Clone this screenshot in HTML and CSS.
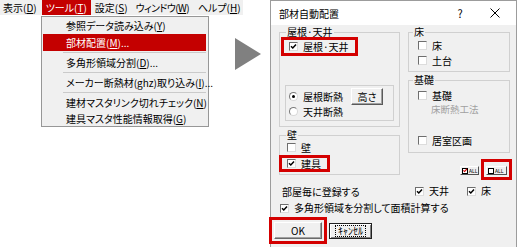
FILE: index.html
```html
<!DOCTYPE html>
<html lang="ja">
<head>
  <meta charset="UTF-8">
  <title>部材自動配置</title>
  <link rel="stylesheet" href="styles.css">
</head>
<body>
  <div class="app">
    <nav class="menubar">
      <span class="menu">表示(<u>D</u>)</span>
      <span class="menu active">ツール(<u>T</u>)</span>
      <span class="menu">設定(<u>S</u>)</span>
      <span class="menu narrow">ウィンドウ(<u>W</u>)</span>
      <span class="menu">ヘルプ(<u>H</u>)</span>
    </nav>
    <ul class="dropdown">
      <li class="item">参照データ読み込み(<u>Y</u>)</li>
      <li class="item selected">部材配置(<u>M</u>)...</li>
      <li class="sep"></li>
      <li class="item">多角形領域分割(<u>D</u>)...</li>
      <li class="sep"></li>
      <li class="item">メーカー断熱材(ghz)取り込み(<u>I</u>)...</li>
      <li class="sep"></li>
      <li class="item">建材マスタリンク切れチェック(<u>N</u>)</li>
      <li class="item">建具マスタ性能情報取得(<u>G</u>)</li>
    </ul>
  </div>

  <svg class="arrow" width="27" height="32" viewBox="0 0 27 32">
    <polygon points="0,0 26,16 0,32" fill="#808080"/>
  </svg>

  <div class="dialog">
    <div class="titlebar">
      <span class="title">部材自動配置</span>
      <span class="help">?</span>
      <span class="close">
        <svg width="10" height="10" viewBox="0 0 10 10"><path d="M0.5 0.5 L9.5 9.5 M9.5 0.5 L0.5 9.5" stroke="#000" stroke-width="1"/></svg>
      </span>
    </div>

    <div class="dialog-body">
      <div class="columns">
        <div class="col">
          <fieldset class="group roof">
            <legend>屋根·天井</legend>
            <label class="check mark roof-check"><span class="cb on"><svg viewBox="0 0 7 7"><path d="M1 3.2 L2.8 5 L6 1.5"/></svg></span>屋根·天井</label>
            <div class="radio-box">
              <div class="radios">
                <label class="radio"><span class="rb on"></span>屋根断熱</label>
                <label class="radio"><span class="rb"></span>天井断熱</label>
              </div>
              <button class="btn height-btn">高さ</button>
            </div>
          </fieldset>

          <fieldset class="group wall">
            <legend>壁</legend>
            <label class="check wall-check"><span class="cb"></span>壁</label>
            <label class="check mark fitting-check"><span class="cb on"><svg viewBox="0 0 7 7"><path d="M1 3.2 L2.8 5 L6 1.5"/></svg></span>建具</label>
          </fieldset>
        </div>

        <div class="col">
          <fieldset class="group floor">
            <legend>床</legend>
            <label class="check first"><span class="cb"></span>床</label>
            <label class="check"><span class="cb"></span>土台</label>
          </fieldset>

          <fieldset class="group base">
            <legend>基礎</legend>
            <label class="check base-check"><span class="cb"></span>基礎</label>
            <div class="note">床断熱工法</div>
            <label class="check room-check"><span class="cb"></span>居室区画</label>
          </fieldset>

          <div class="all-row">
            <button class="all-btn"><span class="mini on"><svg viewBox="0 0 5 5"><path d="M0.5 2.3 L2 3.8 L4.8 0.6"/></svg></span>ALL</button>
            <span class="mark all-mark"><button class="all-btn wide"><span class="mini"></span>ALL</button></span>
          </div>
        </div>
      </div>

      <div class="row per-room">
        <span class="row-label">部屋毎に登録する</span>
        <label class="check ceiling-opt"><span class="cb on"><svg viewBox="0 0 7 7"><path d="M1 3.2 L2.8 5 L6 1.5"/></svg></span>天井</label>
        <label class="check"><span class="cb on"><svg viewBox="0 0 7 7"><path d="M1 3.2 L2.8 5 L6 1.5"/></svg></span>床</label>
      </div>

      <div class="row split-row">
        <label class="check"><span class="cb on"><svg viewBox="0 0 7 7"><path d="M1 3.2 L2.8 5 L6 1.5"/></svg></span>多角形領域を分割して面積計算する</label>
      </div>

      <div class="row buttons">
        <span class="mark ok-mark"><button class="btn ok-btn">OK</button></span>
        <button class="btn cancel-btn"><span class="focus">ｷｬﾝｾﾙ</span></button>
      </div>
    </div>
  </div>
</body>
</html>
```

FILE: styles.css
```css
* {
  box-sizing: border-box;
}

body {
  margin: 0;
  width: 517px;
  height: 247px;
  overflow: hidden;
  display: flex;
  align-items: flex-start;
  background-color: #fff;
  font-family: "Noto Sans CJK JP", "Noto Sans", sans-serif;
  font-size: 10px;
  font-feature-settings: "palt";
  color: #000;
}

/* left: menu */
.app {
  width: 235px;
  flex: none;
}

.menubar {
  display: flex;
  width: 243px;
  height: 15px;
  line-height: 15px;
  background-color: #f0f0f0;
}

.menu {
  padding: 0 4px;
  white-space: nowrap;
}

.menu:first-child {
  padding-left: 3px;
  padding-right: 5px;
}

.menu.narrow {
  letter-spacing: -0.6px;
  padding-right: 5px;
}

.menu.active {
  background-color: #c40000;
  color: #fff;
}

.dropdown {
  list-style: none;
  margin: 1px 0 0 41px;
  padding: 0 2px 0 1px;
  width: 168px;
  background-color: #f0f0f0;
  border: 1px solid #979797;
}

.item {
  height: 17px;
  line-height: 17px;
  padding-left: 23px;
  white-space: nowrap;
}

.item:last-child {
  height: 15px;
  line-height: 15px;
}

.item.selected {
  background-color: #c40000;
  color: #fff;
}

.sep {
  height: 3px;
  padding-top: 1px;
}

.sep::before {
  content: "";
  display: block;
  margin-left: 20px;
  border-top: 1px solid #cacaca;
}

.arrow {
  flex: none;
  margin-top: 38px;
}

/* right: dialog */
.dialog {
  flex: none;
  margin-left: 8px;
  width: 247px;
  height: 252px;
  border: 1px solid #9c9c9c;
  background-color: #f0f0f0;
}

.titlebar {
  display: flex;
  align-items: center;
  height: 24px;
  padding-left: 8px;
  background-color: #fff;
}

.title {
  flex: 1;
}

.help {
  width: 20px;
  text-align: center;
  font-size: 11px;
}

.close {
  display: flex;
  justify-content: center;
  width: 30px;
  margin: 0 6px 0 10px;
}

.dialog-body {
  padding: 0 4px 0 8px;
}

.columns {
  display: grid;
  grid-template-columns: 121px 102px;
  column-gap: 8px;
}

.col {
  display: flex;
  flex-direction: column;
}

.group {
  margin: 0;
  padding: 0;
  min-width: 0;
  border: 1px solid #d0d0d0;
}

.group legend {
  margin-left: 6px;
  padding: 0 1px;
  line-height: 14px;
}

.floor legend,
.base legend {
  margin-left: 4px;
}

.roof {
  height: 102px;
}

.wall {
  margin-top: 1px;
  height: 47px;
}

.floor {
  height: 47px;
}

.base {
  margin-top: 1px;
  height: 80px;
}

/* checkbox and radio */
.check,
.radio {
  display: flex;
  align-items: center;
  gap: 5px;
  height: 15px;
  line-height: 12px;
  white-space: nowrap;
}

.cb {
  flex: none;
  display: flex;
  width: 9px;
  height: 9px;
  background-color: #fff;
  border: 1px solid;
  border-color: #6e6e6e #dcdcdc #dcdcdc #6e6e6e;
}

.cb svg {
  width: 7px;
  height: 7px;
  fill: none;
  stroke: #000;
  stroke-width: 1.5;
}

.rb {
  flex: none;
  display: flex;
  align-items: center;
  justify-content: center;
  width: 9px;
  height: 9px;
  border-radius: 50%;
  background-color: #fff;
  border: 1px solid;
  border-color: #7a7a7a #d8d8d8 #d8d8d8 #7a7a7a;
}

.rb.on::after {
  content: "";
  width: 3px;
  height: 3px;
  border-radius: 50%;
  background-color: #000;
}

.mark {
  border: 3px solid #d40000;
}

.roof-check {
  width: fit-content;
  height: 19px;
  margin: -2px 0 0 1px;
  padding: 0 6px 0 5px;
}

.radio-box {
  display: flex;
  margin: 29px 0 0 5px;
  width: 109px;
  height: 36px;
  padding: 3px 0 0 3px;
  border: 1px solid #d0d0d0;
}

.btn {
  display: flex;
  align-items: center;
  justify-content: center;
  padding: 0;
  font: inherit;
  color: #000;
  background-color: #f0f0f0;
  border: 1px solid;
  border-color: #fff #5a5a5a #5a5a5a #fff;
  box-shadow: inset -1px -1px #a0a0a0;
}

.height-btn {
  margin: -1px 10px 0 auto;
  width: 32px;
  height: 17px;
}

.wall-check {
  height: 13px;
  margin-top: -1px;
  padding-left: 7px;
}

.fitting-check {
  width: fit-content;
  height: 17px;
  margin: 1px 0 0 -1px;
  padding: 0 6px 0 5px;
}

.floor .check {
  padding-left: 9px;
}

.floor .first {
  margin-top: -1px;
}

.base-check {
  height: 11px;
  margin-top: 3px;
  padding-left: 9px;
  line-height: 11px;
}

.note {
  height: 10px;
  line-height: 10px;
  margin-top: 3px;
  padding-left: 22px;
  font-size: 9.5px;
  color: #a0a0a0;
}

.base .room-check {
  height: 13px;
  margin-top: 20px;
  padding-left: 9px;
}

/* ALL buttons */
.all-row {
  display: flex;
  justify-content: flex-end;
  align-items: center;
  gap: 2px;
  margin: 6px -2px 0 0;
}

.all-btn {
  display: flex;
  align-items: center;
  gap: 1px;
  width: 19px;
  height: 9px;
  margin-top: 2px;
  padding: 0 1px;
  font: inherit;
  font-size: 5px;
  line-height: 5px;
  color: #000;
  background-color: #f0f0f0;
  border: 1px solid;
  border-color: #fff #505050 #505050 #fff;
}

.all-btn.wide {
  width: 21px;
  margin-top: 0;
}

.mini {
  flex: none;
  display: flex;
  width: 6px;
  height: 6px;
  background-color: #fff;
  border: 1px solid #000;
}

.mini svg {
  width: 5px;
  height: 5px;
  margin: -1px 0 0 0;
  fill: none;
  stroke: #d40000;
  stroke-width: 1.4;
}

.all-mark {
  padding: 4px 2px 2px;
}

/* lower rows */
.row {
  display: flex;
  align-items: center;
  height: 14px;
}

.per-room {
  margin-top: 4px;
  padding-left: 3px;
}

.row-label {
  width: 133px;
}

.ceiling-opt {
  width: 52px;
}

.split-row {
  margin-top: 3px;
  padding-left: 1px;
}

.buttons {
  height: auto;
  margin-top: 2px;
  gap: 2px;
}

.ok-mark {
  margin-left: -10px;
  padding: 2px;
}

.ok-btn {
  width: 48px;
  height: 17px;
  border-color: #fff #6a6a6a #6a6a6a #fff;
}

.cancel-btn {
  width: 43px;
  height: 16px;
  border-color: #202020;
  box-shadow: inset 1px 1px #fff, inset -1px -1px #808080;
}

.focus {
  padding: 0 2px;
  line-height: 10px;
  border: 1px dotted #000;
}
```
